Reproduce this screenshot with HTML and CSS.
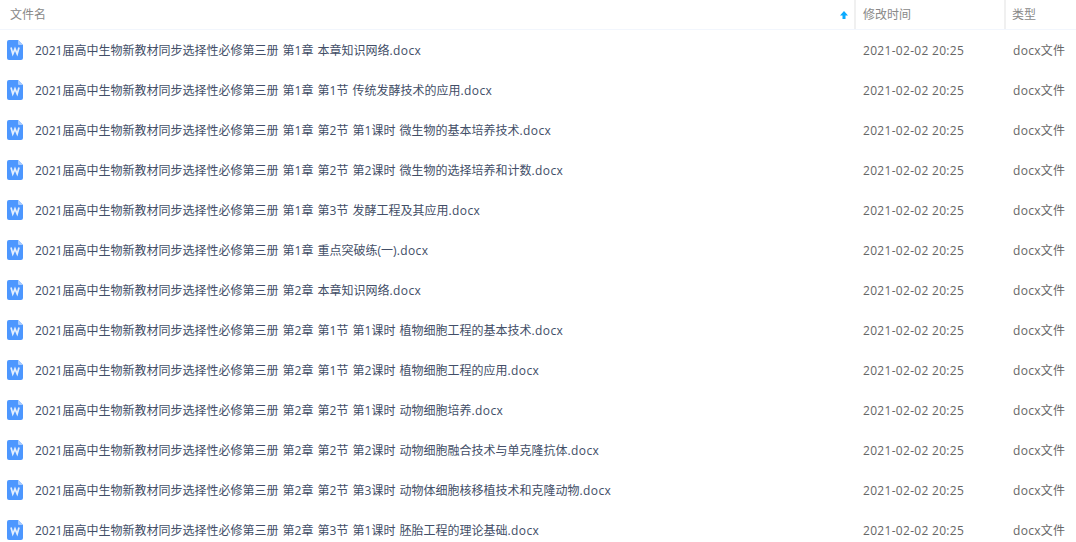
FILE: index.html
```html
<!DOCTYPE html>
<html lang="zh-CN">
<head>
    <meta charset="UTF-8">
    <title>文件列表</title>
    <link rel="stylesheet" href="styles.css">
</head>
<body>
<svg class="defs" width="0" height="0">
    <symbol id="icon-doc" viewBox="0 0 16 20">
        <path d="M2 0H11L16 5V18A2 2 0 0 1 14 20H2A2 2 0 0 1 0 18V2A2 2 0 0 1 2 0Z" fill="#4d97ff"/>
        <path d="M11 0L16 5H12A1 1 0 0 1 11 4Z" fill="#a5caff"/>
        <path d="M4 7.5L5.8 14L8 8.8L10.2 14L12 7.5" fill="none" stroke="#e4efff" stroke-width="1.7"/>
    </symbol>
</svg>
<div class="list-header">
    <div class="col-name">文件名<svg class="sort-arrow" viewBox="0 0 8 8"><path d="M4 0L8 4.5H5.5V8H2.5V4.5H0Z" fill="#09aaff"/></svg></div>
    <div class="col-time">修改时间</div>
    <div class="col-type">类型</div>
</div>
<div class="list">
    <div class="row"><svg class="icon"><use href="#icon-doc"/></svg><div class="name">2021届高中生物新教材同步选择性必修第三册 第1章 本章知识网络<span class="ext">.docx</span></div><div class="time">2021-02-02 20:25</div><div class="type">docx文件</div></div>
    <div class="row"><svg class="icon"><use href="#icon-doc"/></svg><div class="name">2021届高中生物新教材同步选择性必修第三册 第1章 第1节 传统发酵技术的应用<span class="ext">.docx</span></div><div class="time">2021-02-02 20:25</div><div class="type">docx文件</div></div>
    <div class="row"><svg class="icon"><use href="#icon-doc"/></svg><div class="name">2021届高中生物新教材同步选择性必修第三册 第1章 第2节 第1课时 微生物的基本培养技术<span class="ext">.docx</span></div><div class="time">2021-02-02 20:25</div><div class="type">docx文件</div></div>
    <div class="row"><svg class="icon"><use href="#icon-doc"/></svg><div class="name">2021届高中生物新教材同步选择性必修第三册 第1章 第2节 第2课时 微生物的选择培养和计数<span class="ext">.docx</span></div><div class="time">2021-02-02 20:25</div><div class="type">docx文件</div></div>
    <div class="row"><svg class="icon"><use href="#icon-doc"/></svg><div class="name">2021届高中生物新教材同步选择性必修第三册 第1章 第3节 发酵工程及其应用<span class="ext">.docx</span></div><div class="time">2021-02-02 20:25</div><div class="type">docx文件</div></div>
    <div class="row"><svg class="icon"><use href="#icon-doc"/></svg><div class="name">2021届高中生物新教材同步选择性必修第三册 第1章 重点突破练(一)<span class="ext">.docx</span></div><div class="time">2021-02-02 20:25</div><div class="type">docx文件</div></div>
    <div class="row"><svg class="icon"><use href="#icon-doc"/></svg><div class="name">2021届高中生物新教材同步选择性必修第三册 第2章 本章知识网络<span class="ext">.docx</span></div><div class="time">2021-02-02 20:25</div><div class="type">docx文件</div></div>
    <div class="row"><svg class="icon"><use href="#icon-doc"/></svg><div class="name">2021届高中生物新教材同步选择性必修第三册 第2章 第1节 第1课时 植物细胞工程的基本技术<span class="ext">.docx</span></div><div class="time">2021-02-02 20:25</div><div class="type">docx文件</div></div>
    <div class="row"><svg class="icon"><use href="#icon-doc"/></svg><div class="name">2021届高中生物新教材同步选择性必修第三册 第2章 第1节 第2课时 植物细胞工程的应用<span class="ext">.docx</span></div><div class="time">2021-02-02 20:25</div><div class="type">docx文件</div></div>
    <div class="row"><svg class="icon"><use href="#icon-doc"/></svg><div class="name">2021届高中生物新教材同步选择性必修第三册 第2章 第2节 第1课时 动物细胞培养<span class="ext">.docx</span></div><div class="time">2021-02-02 20:25</div><div class="type">docx文件</div></div>
    <div class="row"><svg class="icon"><use href="#icon-doc"/></svg><div class="name">2021届高中生物新教材同步选择性必修第三册 第2章 第2节 第2课时 动物细胞融合技术与单克隆抗体<span class="ext">.docx</span></div><div class="time">2021-02-02 20:25</div><div class="type">docx文件</div></div>
    <div class="row"><svg class="icon"><use href="#icon-doc"/></svg><div class="name">2021届高中生物新教材同步选择性必修第三册 第2章 第2节 第3课时 动物体细胞核移植技术和克隆动物<span class="ext">.docx</span></div><div class="time">2021-02-02 20:25</div><div class="type">docx文件</div></div>
    <div class="row"><svg class="icon"><use href="#icon-doc"/></svg><div class="name">2021届高中生物新教材同步选择性必修第三册 第2章 第3节 第1课时 胚胎工程的理论基础<span class="ext">.docx</span></div><div class="time">2021-02-02 20:25</div><div class="type">docx文件</div></div>
</div>
</body>
</html>
```

FILE: styles.css
```css
html, body {
    margin: 0;
    padding: 0;
    height: 542px;
    overflow: hidden;
    background: #fff;
}

body {
    font-family: "Open Sans", "Noto Sans CJK SC", sans-serif;
    font-size: 12px;
    color: #666;
}

.defs {
    position: absolute;
}

.list-header {
    display: flex;
    height: 29px;
    line-height: 29px;
    border-bottom: 1px solid #f2f6fd;
    color: #888;
}

.col-name {
    width: 854px;
    padding: 0 6px 0 10px;
    box-sizing: border-box;
    display: flex;
    justify-content: space-between;
    align-items: center;
}

.sort-arrow {
    width: 8px;
    height: 8px;
}

.col-time {
    width: 150px;
    padding-left: 7px;
    box-sizing: border-box;
    border-left: 2px solid #f0f0f0;
}

.col-type {
    flex: 1;
    padding-left: 6px;
    border-left: 2px solid #f0f0f0;
}

.row {
    display: flex;
    align-items: center;
    height: 40px;
}

.icon {
    width: 16px;
    height: 20px;
    margin-left: 7px;
    flex: none;
}

.name {
    width: 840px;
    padding-left: 12px;
    box-sizing: border-box;
    color: #424e67;
    white-space: nowrap;
    word-spacing: 1px;
}

.ext {
    letter-spacing: 0.4px;
}

.time {
    width: 150px;
    box-sizing: border-box;
    letter-spacing: 0.3px;
}

.type {
    flex: 1;
    letter-spacing: 0.3px;
}
```
